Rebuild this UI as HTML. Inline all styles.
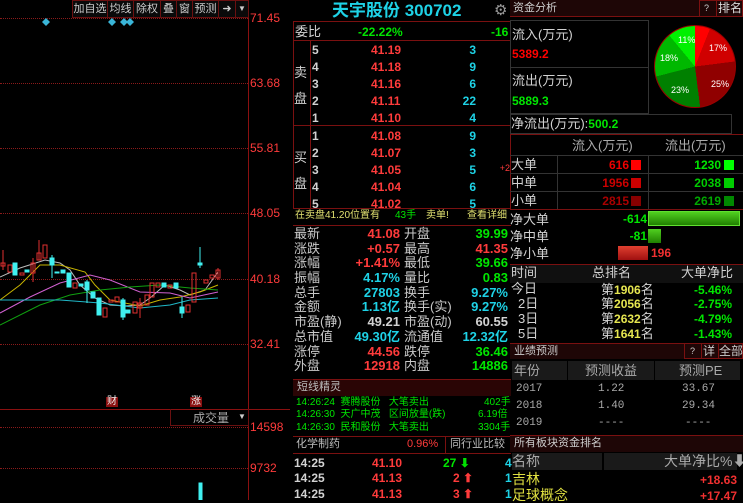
<!DOCTYPE html><html><head><meta charset="utf-8"><style>
*{margin:0;padding:0;box-sizing:border-box}
body{width:743px;height:500px;background:#000;overflow:hidden;position:relative;font-family:"Liberation Sans","Noto Sans CJK SC",sans-serif;font-size:12px;color:#c8c8c8}
.t{position:absolute;white-space:nowrap;line-height:1}
.r{color:#ff3b3b}.g{color:#00e600}.c{color:#1ed2e6}.y{color:#e6e650}.w{color:#d2d2d2}
.dl{position:absolute;left:0;width:248px;border-top:1px dotted #8a1a1a}
.b{position:absolute;border:1px solid #7a1010}
.tb{position:absolute;top:0;height:18px;border:1px solid #6a1010;color:#ccc;font-size:11px;line-height:16px;text-align:center;background:#0a0a0a;white-space:nowrap;overflow:hidden}
.num{font-family:"Liberation Sans",sans-serif;font-weight:bold}
.rt{text-align:right}
</style></head><body>
<div style="position:absolute;left:248px;top:0;width:1px;height:500px;background:#8a1010"></div>
<div class="dl" style="top:18px"></div><div class="dl" style="top:83px"></div><div class="dl" style="top:148px"></div><div class="dl" style="top:213px"></div><div class="dl" style="top:279px"></div><div class="dl" style="top:344px"></div><div class="dl" style="top:427px"></div><div class="dl" style="top:468px"></div>
<div style="position:absolute;left:0;top:409px;width:290px;height:1px;background:#8a1010"></div>
<div class="t r" style="left:250px;top:12px">71.45</div>
<div class="t r" style="left:250px;top:77px">63.68</div>
<div class="t r" style="left:250px;top:142px">55.81</div>
<div class="t r" style="left:250px;top:207px">48.05</div>
<div class="t r" style="left:250px;top:273px">40.18</div>
<div class="t r" style="left:250px;top:338px">32.41</div>
<div class="t r" style="left:250px;top:421px">14598</div>
<div class="t r" style="left:250px;top:462px">9732</div>
<div class="tb" style="left:72px;width:36px">加自选</div>
<div class="tb" style="left:107px;width:27px">均线</div>
<div class="tb" style="left:133px;width:28px">除权</div>
<div class="tb" style="left:160px;width:17px">叠</div>
<div class="tb" style="left:176px;width:17px">窗</div>
<div class="tb" style="left:192px;width:27px">预测</div>
<div class="tb" style="left:218px;width:18px">➜</div>
<div class="tb" style="left:235px;width:14px;font-size:8px">▼</div>
<div style="position:absolute;left:170px;top:409px;width:79px;height:17px;border:1px solid #6a1010;border-top:none"></div>
<div class="t" style="left:193px;top:412px;color:#aaa">成交量</div><div class="t" style="left:238px;top:413px;font-size:8px;color:#ccc">▼</div>
<div class="t" style="left:106px;top:397px;background:#8a1010;color:#eee;font-size:10px;padding:0 1px">财</div>
<div class="t" style="left:190px;top:397px;background:#8a1010;color:#eee;font-size:10px;padding:0 1px">涨</div>
<svg style="position:absolute;left:0;top:0" width="248" height="500">
<g fill="#3ab5d8"><path d="M46 18l4 4-4 4-4-4z"/><path d="M112 18l4 4-4 4-4-4z"/><path d="M124 18l4 4-4 4-4-4z"/><path d="M130 18l4 4-4 4-4-4z"/></g>
<g fill="none" stroke-width="1">
<polyline stroke="#bbb" points="0,277 20,268 45,260 60,263 70,270 80,285 95,298 110,305 125,306 140,305 150,298 165,285 180,290 190,295 205,290 218,272"/>
<polyline stroke="#c8b400" points="0,300 20,285 40,265 60,265 85,272 95,285 110,300 125,303 140,306 160,300 180,297 200,292 218,285"/>
<polyline stroke="#d060d0" points="0,313 30,297 60,283 90,275 110,280 140,292 170,293 190,298 218,292"/>
<polyline stroke="#10a010" points="0,325 40,305 70,295 100,290 130,287 160,285 190,288 218,290"/>
<polyline stroke="#20b8c8" points="0,300 60,300 100,303 140,308 170,305 190,300 218,298"/>
</g>
<g stroke="#e03030" fill="none">
<line x1="3" y1="250" x2="3" y2="270"/><rect x="1" y="263" width="4" height="3"/>
<rect x="8" y="265" width="4" height="7"/><rect x="20" y="273" width="4" height="2"/>
<line x1="33" y1="258" x2="33" y2="282"/><rect x="31" y="263" width="4" height="10"/>
<line x1="39" y1="240" x2="39" y2="260"/><rect x="37" y="253" width="4" height="7"/>
<rect x="43" y="245" width="4" height="13"/><rect x="73" y="283" width="4" height="5"/>
<rect x="103" y="308" width="4" height="9"/><rect x="109" y="300" width="4" height="2"/><rect x="115" y="297" width="4" height="5"/>
<rect x="133" y="302" width="4" height="11"/><line x1="140" y1="298" x2="140" y2="318"/><rect x="138" y="303" width="4" height="5"/>
<rect x="145" y="295" width="4" height="10"/><rect x="150" y="283" width="4" height="14"/><rect x="156" y="283" width="4" height="4"/>
<rect x="168" y="285" width="4" height="3"/><rect x="186" y="305" width="4" height="7"/><rect x="192" y="273" width="4" height="29"/>
<rect x="204" y="280" width="4" height="3"/><rect x="210" y="275" width="4" height="3"/><line x1="218" y1="268" x2="218" y2="280"/><rect x="216" y="270" width="4" height="8"/>
</g>
<g fill="#40f0f0" stroke="#40f0f0">
<rect x="13" y="263" width="4" height="12"/><rect x="25" y="270" width="4" height="2"/>
<line x1="52" y1="255" x2="52" y2="278"/><rect x="50" y="258" width="4" height="7"/>
<rect x="55" y="272" width="4" height="1"/><rect x="61" y="270" width="4" height="3"/><rect x="67" y="273" width="4" height="14"/>
<rect x="79" y="284" width="4" height="2"/><line x1="87" y1="280" x2="87" y2="303"/><rect x="85" y="282" width="4" height="8"/>
<rect x="91" y="292" width="4" height="6"/><rect x="97" y="298" width="4" height="17"/>
<line x1="123" y1="298" x2="123" y2="320"/><rect x="121" y="300" width="4" height="17"/><rect x="126" y="310" width="4" height="3"/>
<rect x="162" y="283" width="4" height="4"/><rect x="174" y="283" width="4" height="5"/>
<line x1="182" y1="297" x2="182" y2="318"/><rect x="180" y="307" width="4" height="6"/>
<line x1="200" y1="247" x2="200" y2="268"/><rect x="198" y="263" width="4" height="2"/>
<rect x="199" y="483" width="3" height="17"/>
</g>
</svg>
<!-- middle -->
<div class="t c" style="left:332px;top:2px;font-size:17px;font-weight:bold">天宇股份 300702</div>
<div class="t" style="left:494px;top:3px;font-size:15px;color:#999">⚙</div>
<div class="b" style="left:293px;top:21px;width:218px;height:188px"></div>
<div style="position:absolute;left:293px;top:40px;width:218px;height:1px;background:#7a1010"></div>
<div style="position:absolute;left:293px;top:125px;width:218px;height:1px;background:#7a1010"></div>
<div style="position:absolute;left:310px;top:40px;width:1px;height:169px;background:#7a1010"></div>
<div class="t w" style="left:295px;top:25px;font-size:13px">委比</div>
<div class="t g num" style="left:358px;top:26px">-22.22%</div>
<div class="t g num" style="left:491px;top:26px">-16</div>
<div class="t w" style="left:294px;top:60px;font-size:13px;line-height:26px;width:14px">卖<br>盘</div>
<div class="t w" style="left:294px;top:145px;font-size:13px;line-height:26px;width:14px">买<br>盘</div>
<div style="position:absolute;left:312px;top:42px;width:198px;font-size:12px" class="num">
<div style="position:relative;height:17px"><span class="t w" style="left:0;top:2px">5</span><span class="t r" style="left:59px;top:2px">41.19</span><span class="t c rt" style="right:34px;top:2px">3</span></div>
<div style="position:relative;height:17px"><span class="t w" style="left:0;top:2px">4</span><span class="t r" style="left:59px;top:2px">41.18</span><span class="t c rt" style="right:34px;top:2px">9</span></div>
<div style="position:relative;height:17px"><span class="t w" style="left:0;top:2px">3</span><span class="t r" style="left:59px;top:2px">41.16</span><span class="t c rt" style="right:34px;top:2px">6</span></div>
<div style="position:relative;height:17px"><span class="t w" style="left:0;top:2px">2</span><span class="t r" style="left:59px;top:2px">41.11</span><span class="t c rt" style="right:34px;top:2px">22</span></div>
<div style="position:relative;height:17px"><span class="t w" style="left:0;top:2px">1</span><span class="t r" style="left:59px;top:2px">41.10</span><span class="t c rt" style="right:34px;top:2px">4</span></div>
<div style="position:relative;height:1px"></div>
<div style="position:relative;height:17px"><span class="t w" style="left:0;top:2px">1</span><span class="t r" style="left:59px;top:2px">41.08</span><span class="t c rt" style="right:34px;top:2px">9</span></div>
<div style="position:relative;height:17px"><span class="t w" style="left:0;top:2px">2</span><span class="t r" style="left:59px;top:2px">41.07</span><span class="t c rt" style="right:34px;top:2px">3</span></div>
<div style="position:relative;height:17px"><span class="t w" style="left:0;top:2px">3</span><span class="t r" style="left:59px;top:2px">41.05</span><span class="t c rt" style="right:34px;top:2px">5</span><span class="t r" style="right:0;top:2px;font-size:9px;font-weight:normal">+2</span></div>
<div style="position:relative;height:17px"><span class="t w" style="left:0;top:2px">4</span><span class="t r" style="left:59px;top:2px">41.04</span><span class="t c rt" style="right:34px;top:2px">6</span></div>
<div style="position:relative;height:17px"><span class="t w" style="left:0;top:2px">5</span><span class="t r" style="left:59px;top:2px">41.02</span><span class="t c rt" style="right:34px;top:2px">5</span></div>
</div>
<div class="t" style="left:295px;top:211px;font-size:10px;color:#e0e070">在卖盘41.20位置有</div>
<div class="t g" style="left:395px;top:211px;font-size:10px">43手</div>
<div class="t" style="left:426px;top:211px;font-size:10px;color:#e0e070">卖单!</div>
<div class="t" style="left:467px;top:211px;font-size:10px;color:#e0e070">查看详细</div>
<div style="position:absolute;left:293px;top:225px;width:218px;height:1px;background:#7a1010"></div>
<div style="position:absolute;left:294px;top:226px;width:216px;font-size:13px">
<style>.sr{position:relative;height:14.7px}.sr span{position:absolute;top:1px;line-height:1;white-space:nowrap}.l1{left:0}.v1{right:110px;font-weight:bold}.l2{left:110px}.v2{right:2px;font-weight:bold}</style>
<div class="sr"><span class="l1">最新</span><span class="v1 r">41.08</span><span class="l2">开盘</span><span class="v2 g">39.99</span></div>
<div class="sr"><span class="l1">涨跌</span><span class="v1 r">+0.57</span><span class="l2">最高</span><span class="v2 r">41.35</span></div>
<div class="sr"><span class="l1">涨幅</span><span class="v1 r">+1.41%</span><span class="l2">最低</span><span class="v2 g">39.66</span></div>
<div class="sr"><span class="l1">振幅</span><span class="v1 c">4.17%</span><span class="l2">量比</span><span class="v2 g">0.83</span></div>
<div class="sr"><span class="l1">总手</span><span class="v1 c">27803</span><span class="l2">换手</span><span class="v2 c">9.27%</span></div>
<div class="sr"><span class="l1">金额</span><span class="v1 c">1.13亿</span><span class="l2">换手(实)</span><span class="v2 c">9.27%</span></div>
<div class="sr"><span class="l1">市盈(静)</span><span class="v1 w">49.21</span><span class="l2">市盈(动)</span><span class="v2 w">60.55</span></div>
<div class="sr"><span class="l1">总市值</span><span class="v1 c">49.30亿</span><span class="l2">流通值</span><span class="v2 c">12.32亿</span></div>
<div class="sr"><span class="l1">涨停</span><span class="v1 r">44.56</span><span class="l2">跌停</span><span class="v2 g">36.46</span></div>
<div class="sr"><span class="l1">外盘</span><span class="v1 r">12918</span><span class="l2">内盘</span><span class="v2 g">14886</span></div>
</div>
<div style="position:absolute;left:293px;top:379px;width:218px;height:17px;background:#2a0505;border-top:1px solid #7a1010"></div>
<div class="t" style="left:297px;top:382px;font-size:11px;color:#bbb">短线精灵</div>
<div class="t g" style="left:296px;top:398px;font-size:10px">14:26:24 &nbsp;赛腾股份 &nbsp;&nbsp;大笔卖出</div><div class="t g" style="left:484px;top:398px;font-size:10px">402手</div>
<div class="t g" style="left:296px;top:410px;font-size:10px">14:26:30 &nbsp;天广中茂 &nbsp;&nbsp;区间放量(跌)</div><div class="t g" style="left:478px;top:410px;font-size:10px">6.19倍</div>
<div class="t g" style="left:296px;top:423px;font-size:10px">14:26:30 &nbsp;民和股份 &nbsp;&nbsp;大笔卖出</div><div class="t g" style="left:478px;top:423px;font-size:10px">3304手</div>
<div style="position:absolute;left:293px;top:436px;width:218px;height:1px;background:#7a1010"></div>
<div style="position:absolute;left:445px;top:436px;width:1px;height:17px;background:#7a1010"></div>
<div style="position:absolute;left:293px;top:453px;width:218px;height:1px;background:#7a1010"></div>
<div class="t" style="left:296px;top:439px;font-size:11px;color:#bbb">化学制药</div>
<div class="t r" style="left:407px;top:439px;font-size:11px">0.96%</div>
<div class="t" style="left:450px;top:439px;font-size:11px;color:#bbb">同行业比较</div>
<div class="t w num" style="left:294px;top:457px">14:25</div><div class="t r num" style="left:372px;top:457px">41.10</div><div class="t g num" style="left:443px;top:457px">27 <span style="color:#00e000">⬇</span></div><div class="t c num" style="left:505px;top:457px">4</div>
<div class="t w num" style="left:294px;top:472px">14:25</div><div class="t r num" style="left:372px;top:472px">41.13</div><div class="t r num" style="left:453px;top:472px">2 ⬆</div><div class="t c num" style="left:505px;top:472px">1</div>
<div class="t w num" style="left:294px;top:488px">14:25</div><div class="t r num" style="left:372px;top:488px">41.13</div><div class="t r num" style="left:453px;top:488px">3 ⬆</div><div class="t c num" style="left:505px;top:488px">1</div>
<!-- right -->
<div style="position:absolute;left:510px;top:0;width:233px;height:17px;background:#1e0606;border-bottom:1px solid #7a1010"></div>
<div class="t" style="left:513px;top:3px;font-size:11px;color:#ccc">资金分析</div>
<div class="b" style="left:699px;top:0;width:18px;height:17px"></div><div class="t" style="left:704px;top:4px;font-size:9px;color:#ccc">?</div>
<div class="b" style="left:716px;top:0;width:27px;height:17px"></div><div class="t" style="left:718px;top:2px;font-size:12px;color:#ddd">排名</div>
<div style="position:absolute;left:510px;top:20px;width:139px;height:94px;border:1px solid #333"></div>
<div style="position:absolute;left:510px;top:67px;width:139px;height:1px;background:#333"></div>
<div class="t w" style="left:512px;top:28px;font-size:13px">流入(万元)</div>
<div class="t num" style="left:512px;top:48px;color:#f00">5389.2</div>
<div class="t w" style="left:512px;top:74px;font-size:13px">流出(万元)</div>
<div class="t g num" style="left:512px;top:95px">5889.3</div>
<div style="position:absolute;left:654px;top:25px;width:82px;height:83px;border-radius:50%;background:conic-gradient(#ff0000 0 6%,#d00000 6% 23%,#900000 23% 48%,#008000 48% 71%,#00b800 71% 89%,#00f000 89% 100%);border:1px solid #900"></div>
<div class="t" style="left:709px;top:44px;font-size:9px;color:#fff">17%</div>
<div class="t" style="left:711px;top:80px;font-size:9px;color:#fff">25%</div>
<div class="t" style="left:671px;top:86px;font-size:9px;color:#fff">23%</div>
<div class="t" style="left:660px;top:54px;font-size:9px;color:#fff">18%</div>
<div class="t" style="left:678px;top:36px;font-size:9px;color:#fff">11%</div>
<div style="position:absolute;left:510px;top:114px;width:222px;height:20px;border:1px solid #333"></div>
<div class="t w" style="left:511px;top:117px;font-size:13px">净流出(万元):<span class="g num" style="font-size:12px">500.2</span></div>
<div style="position:absolute;left:510px;top:134px;width:233px;height:1px;background:#7a1010"></div>
<div class="t" style="left:572px;top:139px;font-size:13px;color:#aaa">流入(万元)</div>
<div class="t" style="left:665px;top:139px;font-size:13px;color:#aaa">流出(万元)</div>
<div style="position:absolute;left:510px;top:155px;width:233px;height:54px;border-top:1px solid #333"></div>
<div style="position:absolute;left:510px;top:173px;width:233px;height:1px;background:#333"></div>
<div style="position:absolute;left:510px;top:191px;width:233px;height:1px;background:#333"></div>
<div style="position:absolute;left:557px;top:155px;width:1px;height:54px;background:#333"></div>
<div style="position:absolute;left:648px;top:155px;width:1px;height:54px;background:#333"></div>
<div class="t w" style="left:511px;top:158px;font-size:13px">大单</div><div class="t num rt" style="right:114px;top:159px;color:#e00">616</div><div style="position:absolute;left:631px;top:160px;width:10px;height:10px;background:#f00"></div><div class="t num g rt" style="right:22px;top:159px">1230</div><div style="position:absolute;left:724px;top:160px;width:10px;height:10px;background:#0f0"></div>
<div class="t w" style="left:511px;top:176px;font-size:13px">中单</div><div class="t num rt" style="right:114px;top:177px;color:#c00">1956</div><div style="position:absolute;left:631px;top:178px;width:10px;height:10px;background:#c00"></div><div class="t num rt" style="right:22px;top:177px;color:#0c0">2038</div><div style="position:absolute;left:724px;top:178px;width:10px;height:10px;background:#0c0"></div>
<div class="t w" style="left:511px;top:194px;font-size:13px">小单</div><div class="t num rt" style="right:114px;top:195px;color:#a00">2815</div><div style="position:absolute;left:631px;top:196px;width:10px;height:10px;background:#800"></div><div class="t num rt" style="right:22px;top:195px;color:#0a0">2619</div><div style="position:absolute;left:724px;top:196px;width:10px;height:10px;background:#080"></div>
<div style="position:absolute;left:510px;top:209px;width:233px;height:1px;background:#7a1010"></div>
<div class="t w" style="left:510px;top:213px;font-size:13px">净大单</div><div class="t g num rt" style="right:96px;top:213px">-614</div><div style="position:absolute;left:648px;top:211px;width:92px;height:15px;background:linear-gradient(#50d020,#208000);border:1px solid #60e030"></div>
<div class="t w" style="left:510px;top:230px;font-size:13px">净中单</div><div class="t g num rt" style="right:96px;top:230px">-81</div><div style="position:absolute;left:648px;top:229px;width:13px;height:14px;background:linear-gradient(#50d020,#208000)"></div>
<div class="t w" style="left:510px;top:247px;font-size:13px">净小单</div><div style="position:absolute;left:618px;top:246px;width:30px;height:14px;background:linear-gradient(#e04030,#a01010)"></div><div class="t num" style="left:651px;top:247px;color:#f03030">196</div>
<div style="position:absolute;left:510px;top:264px;width:233px;height:19px;background:#101010;border-top:1px solid #7a1010"></div>
<div class="t w" style="left:511px;top:266px;font-size:13px">时间</div><div class="t w" style="left:592px;top:266px;font-size:13px">总排名</div><div class="t w" style="left:681px;top:266px;font-size:13px">大单净比</div>
<div class="t w" style="left:511px;top:282px;font-size:13px">今日</div><div class="t w" style="left:601px;top:283px;font-size:13px">第<span class="y num" style="font-size:12px">1906</span>名</div><div class="t g num" style="left:694px;top:284px">-5.46%</div>
<div class="t w" style="left:518px;top:297px;font-size:13px">2日</div><div class="t w" style="left:601px;top:297px;font-size:13px">第<span class="y num" style="font-size:12px">2056</span>名</div><div class="t g num" style="left:694px;top:298px">-2.75%</div>
<div class="t w" style="left:518px;top:312px;font-size:13px">3日</div><div class="t w" style="left:601px;top:312px;font-size:13px">第<span class="y num" style="font-size:12px">2632</span>名</div><div class="t g num" style="left:694px;top:313px">-4.79%</div>
<div class="t w" style="left:518px;top:327px;font-size:13px">5日</div><div class="t w" style="left:601px;top:327px;font-size:13px">第<span class="y num" style="font-size:12px">1641</span>名</div><div class="t g num" style="left:694px;top:328px">-1.43%</div>
<div style="position:absolute;left:510px;top:343px;width:233px;height:16px;background:#1e0606;border-top:1px solid #7a1010"></div>
<div class="t" style="left:514px;top:346px;font-size:11px;color:#ccc">业绩预测</div>
<div class="b" style="left:684px;top:343px;width:18px;height:16px"></div><div class="t" style="left:690px;top:347px;font-size:9px;color:#ccc">?</div>
<div class="b" style="left:701px;top:343px;width:18px;height:16px"></div><div class="t" style="left:703px;top:345px;font-size:12px;color:#ccc">详</div>
<div class="b" style="left:718px;top:343px;width:25px;height:16px"></div><div class="t" style="left:719px;top:345px;font-size:12px;color:#ccc">全部</div>
<div style="position:absolute;left:512px;top:361px;width:55px;height:19px;background:#1a1a1a"></div>
<div style="position:absolute;left:568px;top:361px;width:86px;height:19px;background:#1a1a1a"></div>
<div style="position:absolute;left:655px;top:361px;width:85px;height:19px;background:#1a1a1a"></div>
<div class="t" style="left:514px;top:364px;font-size:13px;color:#aaa">年份</div><div class="t" style="left:585px;top:364px;font-size:13px;color:#aaa">预测收益</div><div class="t" style="left:679px;top:364px;font-size:13px;color:#aaa">预测PE</div>
<div class="t" style="left:516px;top:384px;font-size:11px;color:#aaa;font-family:'Liberation Mono',monospace">2017</div><div class="t" style="left:598px;top:384px;font-size:11px;color:#aaa;font-family:'Liberation Mono',monospace">1.22</div><div class="t" style="left:682px;top:384px;font-size:11px;color:#aaa;font-family:'Liberation Mono',monospace">33.67</div>
<div class="t" style="left:516px;top:401px;font-size:11px;color:#aaa;font-family:'Liberation Mono',monospace">2018</div><div class="t" style="left:598px;top:401px;font-size:11px;color:#aaa;font-family:'Liberation Mono',monospace">1.40</div><div class="t" style="left:682px;top:401px;font-size:11px;color:#aaa;font-family:'Liberation Mono',monospace">29.34</div>
<div class="t" style="left:516px;top:418px;font-size:11px;color:#aaa;font-family:'Liberation Mono',monospace">2019</div><div class="t" style="left:598px;top:418px;font-size:11px;color:#aaa;font-family:'Liberation Mono',monospace">----</div><div class="t" style="left:685px;top:418px;font-size:11px;color:#aaa;font-family:'Liberation Mono',monospace">----</div>
<div style="position:absolute;left:510px;top:435px;width:233px;height:17px;background:#1e0606;border-top:1px solid #7a1010"></div>
<div class="t" style="left:514px;top:438px;font-size:11px;color:#ccc">所有板块资金排名</div>
<div style="position:absolute;left:512px;top:453px;width:90px;height:17px;background:#1a1a1a"></div>
<div style="position:absolute;left:604px;top:453px;width:133px;height:17px;background:#1a1a1a"></div>
<div class="t" style="left:512px;top:454px;font-size:14px;color:#aaa">名称</div><div class="t" style="left:664px;top:454px;font-size:14px;color:#aaa">大单净比%⬇</div>
<div class="t" style="left:512px;top:472px;font-size:14px;color:#e0e040">吉林</div><div class="t num rt" style="right:6px;top:474px;color:#f03030">+18.63</div>
<div class="t" style="left:512px;top:488px;font-size:14px;color:#e0e040">足球概念</div><div class="t num rt" style="right:6px;top:490px;color:#f03030">+17.47</div>
</body></html>
